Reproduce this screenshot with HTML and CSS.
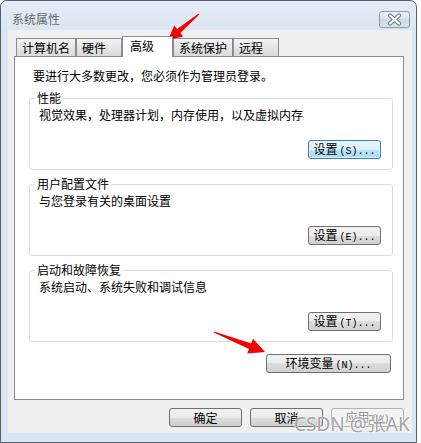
FILE: index.html
```html
<!DOCTYPE html>
<html lang="zh-CN">
<head>
  <meta charset="UTF-8">
  <title>系统属性</title>
  <link rel="stylesheet" href="styles.css">
</head>
<body>

  <div class="window">
    <!-- Title bar -->
    <div class="titlebar">
      <span class="title">系统属性</span>
      <div class="close">
        <svg width="29" height="15" viewBox="0 0 29 15">
          <path d="M10 3.5 L19 11.5 M19 3.5 L10 11.5" stroke="#6b7482" stroke-width="4.2" stroke-linecap="round"/>
          <path d="M10 3.5 L19 11.5 M19 3.5 L10 11.5" stroke="#ffffff" stroke-width="2.2" stroke-linecap="round"/>
        </svg>
      </div>
    </div>

    <div class="client">
      <!-- Tabs -->
      <div class="tabs">
        <div class="tab">计算机名</div>
        <div class="tab">硬件</div>
        <div class="tab selected">高级</div>
        <div class="tab">系统保护</div>
        <div class="tab">远程</div>
      </div>

      <div class="panel">
        <p class="note">要进行大多数更改，您必须作为管理员登录。</p>

        <div class="group">
          <span class="legend">性能</span>
          <p class="desc">视觉效果，处理器计划，内存使用，以及虚拟内存</p>
          <div class="actions"><button class="btn focused">设置<span class="key">(S)...</span></button></div>
        </div>

        <div class="group">
          <span class="legend">用户配置文件</span>
          <p class="desc">与您登录有关的桌面设置</p>
          <div class="actions"><button class="btn">设置<span class="key">(E)...</span></button></div>
        </div>

        <div class="group">
          <span class="legend">启动和故障恢复</span>
          <p class="desc">系统启动、系统失败和调试信息</p>
          <div class="actions"><button class="btn">设置<span class="key">(T)...</span></button></div>
        </div>

        <div class="env-row"><button class="btn wide">环境变量<span class="key">(N)...</span></button></div>
      </div>

      <div class="footer">
        <button class="btn">确定</button>
        <button class="btn">取消</button>
        <button class="btn" disabled>应用<span class="key">(A)</span></button>
      </div>
    </div>
  </div>

  <!-- red annotation arrows drawn over the dialog -->
  <svg class="arrows" width="421" height="443" viewBox="0 0 421 443">
    <polygon fill="#f40000" points="199.3,14.4 180.3,32.9 183.2,36.4 168,40 174.2,25.6 177.1,29.1 198.7,13.6"/>
    <polygon fill="#f40000" points="213.8,332.5 249.0,349.0 247.2,353.6 265,352 253.0,338.8 251.2,343.4 214.2,331.5"/>
  </svg>

  <div class="watermark">CSDN @张AK</div>

</body>
</html>
```

FILE: styles.css
```css
body {
  margin: 0;
  background: #fff;
  font-family: "Noto Sans CJK SC", "Noto Sans", sans-serif;
  font-size: 12px;
  color: #000;
}
p {
  margin: 0;
}
.window {
  box-sizing: border-box;
  width: 417px;
  height: 443px;
  padding: 0 4px 0 7px;
  border: 1px solid #56616e;
  border-radius: 7px 7px 0 0;
  background: linear-gradient(#e6edf6, #d9e5f2 30px);
}
.titlebar {
  display: flex;
  align-items: center;
  justify-content: space-between;
  box-sizing: border-box;
  height: 29px;
  padding-top: 7px;
}
.title {
  margin-left: 4px;
  line-height: 14px;
  color: #6a6a6a;
}
.close {
  box-sizing: border-box;
  width: 31px;
  height: 17px;
  margin-right: 2px;
  border: 1px solid #8d9aac;
  border-radius: 3px;
  background: linear-gradient(#eef2f7, #dbe3ee 50%, #cfd9e6 50%, #d9e2ee);
}
.close svg {
  display: block;
}
.client {
  box-sizing: border-box;
  height: 403px;
  padding: 6px 8px 6px 6px;
  background: #f0f0f0;
}
.tabs {
  display: flex;
  align-items: flex-end;
  height: 20px;
  padding-left: 2px;
}
.tab {
  box-sizing: border-box;
  min-width: 46px;
  height: 18px;
  padding: 0 5px;
  border: 1px solid #898c95;
  border-bottom: none;
  background: linear-gradient(#f4f4f4, #e6e6e6 50%, #dadada);
  line-height: 17px;
  white-space: nowrap;
}
.tab.selected {
  position: relative;
  z-index: 1;
  min-width: 51px;
  height: 21px;
  margin-bottom: -1px;
  padding-left: 7px;
  background: #fff;
  line-height: 18px;
}
.panel {
  box-sizing: border-box;
  height: 344px;
  padding: 12px 10px 0 14px;
  border: 1px solid #898c95;
  background: #fff;
}
.note {
  margin-left: 4px;
  line-height: 14px;
}
.group {
  position: relative;
  box-sizing: border-box;
  height: 72px;
  margin-top: 14px;
  padding: 9px 11px 0 9px;
  border: 1px solid #d5dfe5;
  border-radius: 3px;
}
.note + .group {
  margin-top: 15px;
}
.legend {
  position: absolute;
  top: -8px;
  left: 5px;
  padding: 0 2px;
  background: #fff;
  line-height: 14px;
}
.desc {
  line-height: 14px;
}
.actions {
  display: flex;
  justify-content: flex-end;
  margin-top: 18px;
}
.env-row {
  display: flex;
  justify-content: flex-end;
  margin: 12px 2px 0 0;
}
.btn {
  box-sizing: border-box;
  width: 73px;
  height: 19px;
  padding: 0;
  border: 1px solid #707070;
  border-radius: 3px;
  background: linear-gradient(#f2f2f2, #ebebeb 50%, #dddddd 50%, #cfcfcf);
  font-family: inherit;
  font-size: 12px;
  line-height: 16px;
  color: #000;
}
.key {
  margin-left: 2px;
  font-family: "Liberation Mono", "DejaVu Sans Mono", monospace;
  font-size: 10px;
}
.btn.focused {
  border-color: #3c7fb1;
  background: linear-gradient(#eaf6fd, #d9f0fc 50%, #bee6fd 50%, #a7d9f5);
  box-shadow: inset 0 0 0 1px #e0f2fb;
}
.btn.wide {
  width: 125px;
}
.btn:disabled {
  border-color: #adb2b5;
  background: #f4f4f4;
  color: #8d8d8d;
  text-shadow: 1px 1px 0 #fff;
}
.footer {
  display: flex;
  justify-content: flex-end;
  gap: 8px;
  margin-top: 8px;
}
.arrows {
  position: absolute;
  top: 0;
  left: 0;
  pointer-events: none;
}
.watermark {
  position: absolute;
  top: 411px;
  left: 294px;
  font-family: "Noto Sans", "Noto Sans CJK SC", sans-serif;
  font-size: 19px;
  line-height: 26px;
  color: rgba(110, 110, 110, 0.65);
  text-shadow: 0 0 1px #fff, 0 0 2px #fff;
  white-space: nowrap;
}
```
